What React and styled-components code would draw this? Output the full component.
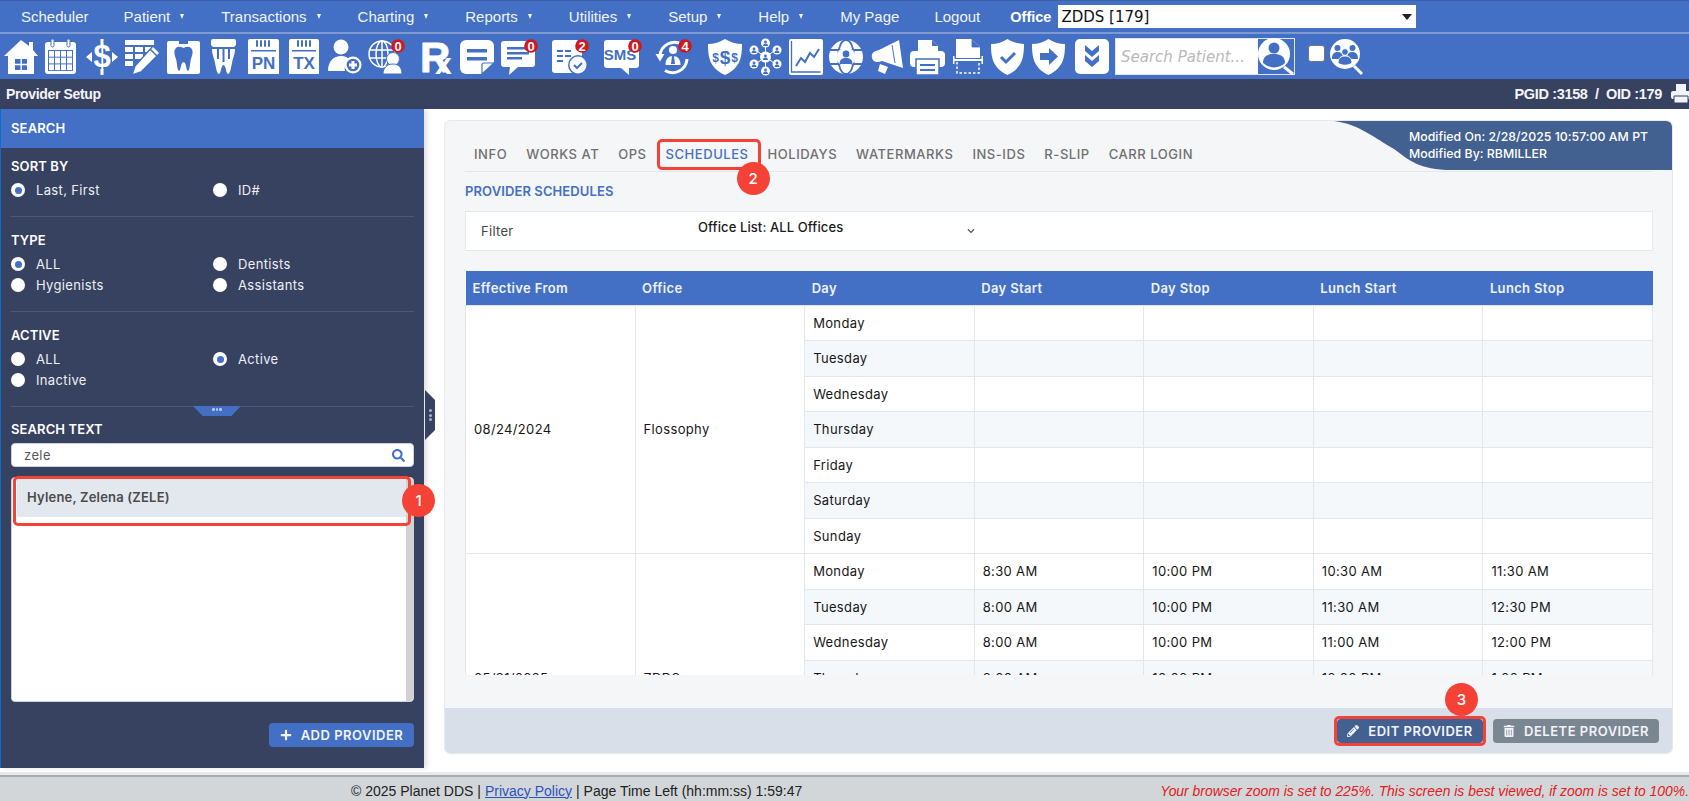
import React from "react";
import styled, { createGlobalStyle } from "styled-components";
import { FaPlus, FaPencilAlt, FaTrashAlt, FaSearch, FaChevronDown } from "react-icons/fa";

const BLUE = "#4370c4";
const NAVY = "#374160";
const RED = "#f44336";
const UI = `Inter, "Noto Sans", sans-serif`;
const ARIAL = `"Liberation Sans", Arial, sans-serif`;

const Global = createGlobalStyle`
  html, body { margin: 0; padding: 0; height: 100%; overflow: hidden; background: #fff; }
  * { box-sizing: border-box; }
  body { font-family: ${UI}; }
`;

const Page = styled.div`height: 100vh; display: flex; flex-direction: column; overflow: hidden;`;

/* top navigation */
const NavBar = styled.nav`
  height: 34px; flex: none; background: ${BLUE};
  border-top: 1px solid #3a5fa6; border-bottom: 2px solid #7f9ad0;
  padding-left: 21px; display: flex; align-items: center; gap: 35px;
  font: 15px ${ARIAL}; color: #f1f4fb;
`;
const NavItem = styled.span`display: inline-flex; align-items: center; white-space: nowrap;`;
const Caret = styled.span`
  margin: 0 2px 0 10px; width: 0; height: 0;
  border-left: 2.5px solid transparent; border-right: 2.5px solid transparent; border-top: 5px solid #f1f4fb;
`;
const OfficeGroup = styled.div`display: flex; align-items: center; gap: 7px; margin-left: -5px;`;
const OfficeLabel = styled.span`font: bold 14.5px ${ARIAL}; color: #fff;`;
const OfficeSelect = styled.div`
  width: 358px; height: 23px; background: #fff; color: #111; padding-left: 3px;
  display: flex; align-items: center; justify-content: space-between;
  font: 15px "DejaVu Sans", sans-serif;
`;
const SelectArrow = styled.span`
  margin-right: 4px; width: 0; height: 0;
  border-left: 5px solid transparent; border-right: 5px solid transparent; border-top: 6px solid #222;
`;

/* icon toolbar */
const Toolbar = styled.div`
  height: 45px; flex: none; background: ${BLUE}; display: flex; align-items: center; padding-left: 4px;
`;
const Slot = styled.svg`
  flex: none; height: 36px; margin-left: ${(p) => p.$gap}px; overflow: visible; fill: #fff;
  text { font-family: ${ARIAL}; font-weight: bold; }
`;
const PatientSearch = styled.div`
  margin-left: 6px; width: 180px; height: 37px; background: #fff; border: 1px solid #dfe6f5;
  display: flex; align-items: center; justify-content: space-between;
`;
const PatientHint = styled.span`
  padding-left: 5px; font: italic 15px "DejaVu Sans", sans-serif; color: #b9b9b9; white-space: nowrap;
`;
const UserSearchBox = styled.div`width: 36px; height: 35px; background: ${BLUE}; flex: none;`;
const CheckBox = styled.span`
  flex: none; width: 17px; height: 17px; margin: -6px 0 0 13px; background: #fff; border: 1px solid #777; border-radius: 3px;
`;

/* title bar */
const TitleBar = styled.div`
  height: 30px; flex: none; background: ${NAVY}; display: flex; align-items: center; justify-content: space-between;
  color: #f4f5f8; font: bold 14px ${ARIAL}; padding-left: 6px;
`;
const TitleText = styled.span`letter-spacing: -0.35px;`;
const TitleRight = styled.div`display: flex; align-items: center; gap: 9px; font-size: 14.5px; letter-spacing: -0.35px;`;

/* content */
const Content = styled.div`flex: 1; min-height: 0; display: flex; background: #fff;`;

const Sidebar = styled.aside`
  position: relative; width: 424px; flex: none; height: 659px; background: ${NAVY}; color: #fff;
  border-left: 1px solid #0a6ecb; box-shadow: 3px 0 5px rgba(0,0,0,.12);
`;
const SideHeader = styled.div`
  height: 39px; background: ${BLUE}; display: flex; align-items: center; padding: 0 0 1px 10px;
  font-size: 13px; font-weight: 600; letter-spacing: .15px;
`;
const SideBody = styled.div`padding: 0 10px;`;
const Section = styled.section`
  padding: ${(p) => (p.$first ? "10px" : "15px")} 0 16px;
  border-bottom: 1px solid #4c5775;
`;
const SectionTitle = styled.div`
  font-size: 13px; font-weight: 600; line-height: 16px; margin-bottom: 6px; letter-spacing: .1px;
`;
const RadioGrid = styled.div`display: grid; grid-template-columns: 202px 1fr; grid-auto-rows: 20px; row-gap: 1px;`;
const RadioRow = styled.label`display: flex; align-items: center; gap: 11px; font-size: 13px; letter-spacing: .35px; font-weight: 400; color: #eef0f5;`;
const RadioDot = styled.span`
  width: 14px; height: 14px; border-radius: 50%; background: #fff; display: inline-flex; align-items: center; justify-content: center;
  &::after { content: ""; width: 7px; height: 7px; border-radius: 50%; background: ${(p) => (p.$on ? BLUE : "#fff")}; }
`;
const DragTab = styled.div`
  position: absolute; left: 192px; top: 297px; width: 48px; height: 10px; background: ${BLUE};
  clip-path: polygon(0 0, 100% 0, 80% 100%, 20% 100%);
  display: flex; justify-content: center; gap: 1px; padding-top: 2px;
`;
const Pip = styled.i`width: 2.5px; height: 2.5px; background: #b6c6e6; border-radius: 50%;`;
const EdgeGrip = styled.div`
  position: absolute; right: -11px; top: 281px; width: 10px; height: 50px; background: ${NAVY};
  clip-path: polygon(0 0, 100% 20%, 100% 80%, 0 100%);
  display: flex; flex-direction: column; align-items: center; justify-content: center; gap: 1.5px;
  i { width: 3px; height: 3px; background: #a9b0c2; border-radius: 50%; }
`;
const SearchSection = styled.div`padding-top: 14px;`;
const SearchInput = styled.div`
  height: 24px; margin-top: 2px; background: #fff; border: 1px solid #ccd2dc; border-radius: 4px; padding: 0 8px 0 12px;
  display: flex; align-items: center; justify-content: space-between;
  color: #555; font-size: 13px; letter-spacing: .4px;
  svg { color: ${BLUE}; font-size: 13px; }
`;
const ResultList = styled.div`
  position: relative; height: 225px; margin-top: 10px; background: #fff; border-radius: 4px; border: 1px solid #ccd2dc;
  padding: 1px 6px 0 5px;
  &::after { content: ""; position: absolute; right: 0; top: 0; bottom: 0; width: 7px; background: #d2d2d2; border-radius: 0 3px 3px 0; }
`;
const ResultRow = styled.div`
  height: 38px; background: #e3e7ee; color: #4b4b4b; font-size: 13px; font-weight: 600; padding: 10px 0 0 10px; letter-spacing: .2px;
`;
const Outline = styled.span`
  position: absolute; pointer-events: none; z-index: 3; border: 3px solid ${RED}; border-radius: 5px;
  top: ${(p) => p.$t}px; left: ${(p) => p.$l}px; right: ${(p) => p.$r}px; bottom: ${(p) => p.$b}px;
`;
const Step = styled.span`
  position: absolute; z-index: 4; width: 33px; height: 33px; border-radius: 50%; background: ${RED}; color: #fff;
  display: flex; align-items: center; justify-content: center; font: 500 15px Inter, sans-serif; letter-spacing: 0;
  top: ${(p) => p.$t}px; left: ${(p) => p.$l}px;
`;
const SideActions = styled.div`display: flex; justify-content: flex-end; margin-top: 21px;`;
const Btn = styled.button`
  position: relative; height: 24px; border: 0; border-radius: 4px; color: #f1f3f8; background: ${(p) => p.$bg};
  width: ${(p) => p.$w}px; display: inline-flex; align-items: center; justify-content: center; gap: ${(p) => p.$gap || 9}px;
  font: 600 13px ${UI}; letter-spacing: .5px; white-space: nowrap; padding: 0;
  svg { font-size: 12px; }
`;

/* main card */
const Main = styled.main`flex: 1; min-width: 0; padding: 11px 16px 0 20px;`;
const Card = styled.div`
  position: relative; height: 634px; background: #f5f6f8; border: 1px solid #e7e9ee; border-radius: 6px;
  display: flex; flex-direction: column; overflow: hidden;
`;
const CardClip = styled.div`position: relative; flex: 1; min-height: 0; display: flex; flex-direction: column; padding: 0 19px 33px 20px;`;
const Tabs = styled.div`
  height: 51px; flex: none; border-bottom: 1px solid #e6e8ec; display: flex; gap: 19px; padding: 26px 0 0 9px;
`;
const Tab = styled.span`
  position: relative; height: 15px; line-height: 15px; font-size: 13px; font-weight: 500; letter-spacing: .55px;
  color: ${(p) => (p.$on ? BLUE : "#6f6f6f")}; white-space: nowrap;
`;
const Ribbon = styled.div`
  position: absolute; top: -1px; right: -1px; width: 338px; height: 50px; color: #fff;
  font-size: 12.3px; font-weight: 500; line-height: 17px; padding: 8px 0 0 74px; white-space: nowrap; letter-spacing: .03px;
`;
const RibbonArt = styled.svg`position: absolute; inset: 0; z-index: -1;`;
const RibbonLayer = styled.div`position: absolute; top: 0; right: 0; width: 338px; height: 50px; isolation: isolate;`;
const SectionHead = styled.div`
  flex: none; margin-top: 11px; height: 16px; line-height: 16px; color: ${BLUE}; font-size: 13px; font-weight: 600; letter-spacing: .1px;
`;
const FilterBar = styled.div`
  flex: none; height: 40px; margin-top: 12px; background: #fff; border: 1px solid #e6e8ed;
  display: flex; align-items: center; padding-left: 15px; font-size: 13px;
`;
const FilterLabel = styled.span`width: 217px; color: #444; letter-spacing: .3px;`;
const FilterValue = styled.div`
  width: 277px; display: flex; align-items: center; justify-content: space-between; color: #1a1a1a; font-weight: 500;
  span { margin-top: -9px; letter-spacing: .1px; }
  svg { font-size: 8px; color: #555; margin-right: 0; }
`;
const TableWrap = styled.div`flex: 1; min-height: 0; margin-top: 20px; overflow: hidden;`;
const Table = styled.table`
  width: 100%; table-layout: fixed; border-collapse: collapse; font-size: 13px; color: #161616; font-weight: 400; letter-spacing: .35px;
`;
const Th = styled.th`
  height: 34px; background: ${BLUE}; color: #eef2fb; font-weight: 600; text-align: left; padding: 0 7px; font-size: 13px; letter-spacing: .35px;
`;
const Td = styled.td`
  height: 35.5px; padding: 0 8px; border: 1px solid #e3e6ec; background: ${(p) => (p.$alt ? "#f5f8fb" : "#fff")};
`;
const CardFoot = styled.div`
  flex: none; height: 45px; background: #d9dfe8; display: flex; justify-content: flex-end; align-items: center; gap: 10px; padding-right: 13px;
`;

/* footer */
const Footer = styled.footer`
  height: 26px; flex: none; background: #d3d6d9; border-top: 2px solid #a8abae; box-shadow: 0 -3px 0 #e8e9ea; padding-top: 3px;
  display: flex; align-items: center; padding-left: 351px; font: 14px ${ARIAL}; color: #222; white-space: pre; position: relative;
`;
const FootLink = styled.a`color: #2a52be; text-decoration: underline; margin: 0 4px;`;
const FootWarn = styled.span`margin-left: auto; color: #e0201c; font-style: italic; font-size: 13.9px; padding-right: 0;`;

/* ---------- icons ---------- */
const Badge = ({ x, y = 7, n }) => (
  <g>
    <circle cx={x} cy={y} r="6.8" fill="#d4161c" />
    <text x={x} y={y + 4.7} fontSize="13" textAnchor="middle" fill="#fff">{n}</text>
  </g>
);
const I = ({ w, gap = 0, children }) => (
  <Slot viewBox={`0 0 ${w} 36`} width={w} $gap={gap}>{children}</Slot>
);
const Rings = ({ xs }) => xs.map((x) => <rect key={x} x={x} y="1" width="2" height="7" rx="1" fill={BLUE} />);

const Icons = [
  <I w={34} key="home"><path d="M17 1 25 7V3h4v8l5 6h-4v18H4V17H0z" /><rect x="11" y="20" width="12" height="11" fill={BLUE} /><path d="M16.5 20h1.4v11h-1.4zM11 24.8h12v1.4H11z" /></I>,
  <I w={31} gap={7} key="cal"><rect y="3" width="31" height="32" rx="3" /><rect x="6" y="0" width="3" height="8" rx="1.5" stroke={BLUE} /><rect x="22" y="0" width="3" height="8" rx="1.5" stroke={BLUE} /><path fill={BLUE} d="M3 11h25v21H3z" /><g>{[0, 1, 2, 3].map((c) => [0, 1, 2].map((r) => <rect key={`${c}${r}`} x={4 + c * 6} y={12 + r * 6.7} width="5" height="5.7" />))}</g></I>,
  <I w={32} gap={10} key="dollar"><text x="16" y="28" fontSize="31" textAnchor="middle">$</text><path d="M0 18l6-5v10zM32 18l-6-5v10z" /><path d="M16 0v6M16 30v6" stroke="#fff" strokeWidth="3" /></I>,
  <I w={35} gap={7} key="tablepen"><path d="M0 1h29v5H0zM0 8h8v5H0zM10 8h8v5h-8zM20 8h9v3l-2 2h-7zM0 15h8v5H0zM10 15h8v3l-2 2h-6zM0 22h8v5H0z" /><path d="M28 7l7 7-19 19-9 3 3-9z" stroke={BLUE} strokeWidth="1.4" /><path d="M25 10l7 7" stroke={BLUE} strokeWidth="1.5" /></I>,
  <I w={33} gap={7} key="toothcard"><path d="M0 4a2 2 0 0 1 2-2h10v3h9V2h10a2 2 0 0 1 2 2v29a2 2 0 0 1-2 2H2a2 2 0 0 1-2-2z" /><path fill={BLUE} d="M9 9c3-2 5-1 7.5 0 2.500-1 5-2 7.500 0 3 3 1 8 0 11-1 3-1 11-3 12-2 0-1.500-9-4.500-9s-2.500 9-4.500 9c-2-1-2-9-3-12-1-3-3-8 0-11z" /></I>,
  <I w={25} gap={11} key="crown"><path d="M2 0h21a2 2 0 0 1 2 2v4l-2 2H2L0 6V2a2 2 0 0 1 2-2z" /><path d="M1 10h23c0 6-2 8-3 14-1 5-2 11-4 11s-2-9-4.500-9S10 35 8 35s-3-6-4-11C3 18 1 16 1 10z" /><path d="M7 10v10M12.500 10v13M18 10v10" stroke={BLUE} strokeWidth="2" /></I>,
  <I w={31} gap={12} key="pn"><path d="M0 4h31v31H0z" /><rect x="0" y="0" width="31" height="10" rx="2" /><path fill={BLUE} d="M3 11h25v1.500H3z" /><Rings xs={[8, 12, 16, 20]} /><text x="15.500" y="30" fontSize="17" textAnchor="middle" fill={BLUE}>PN</text></I>,
  <I w={30} gap={10} key="tx"><path d="M0 4h30v31H0z" /><rect x="0" y="0" width="30" height="10" rx="2" /><path fill={BLUE} d="M3 11h24v1.500H3z" /><Rings xs={[8, 12, 16, 20]} /><text x="15" y="30" fontSize="17" textAnchor="middle" fill={BLUE}>TX</text></I>,
  <I w={33} gap={9} key="userplus"><circle cx="13" cy="8" r="7.500" /><path d="M0 32c0-10 6-15 13-15 4 0 7 1.500 9 4-4 2-6 6-5 11z" /><circle cx="25" cy="26" r="8.500" /><circle cx="25" cy="26" r="6.300" fill={BLUE} /><path d="M23.500 22h3v2.500H29v3h-2.500V30h-3v-2.500H21v-3h2.500z" /></I>,
  <I w={34} gap={7} key="globeuser"><g fill="none" stroke="#fff" strokeWidth="1.500"><circle cx="14" cy="15" r="13" /><ellipse cx="14" cy="15" rx="6" ry="13" /><path d="M14 2v26M1.500 11h25M1.500 19h25" /></g><circle cx="25" cy="20" r="6.500" stroke={BLUE} /><path d="M15 35c0-6 4-10 10-10s9 4 9 10z" stroke={BLUE} /><Badge x={30} n="0" /></I>,
  <I w={31} gap={19} key="rx"><text x="-1" y="33" fontSize="42" stroke="#fff" strokeWidth=".8">R</text><text x="14" y="35" fontSize="30">x</text></I>,
  <I w={34} gap={8} key="note"><path d="M6 1h22a6 6 0 0 1 6 6v16L21 35H6a6 6 0 0 1-6-6V7a6 6 0 0 1 6-6z" /><path fill={BLUE} d="M7 10h20v3.500H7zM7 18h20v3.500H7z" /><path d="M22 35V26a2 2 0 0 1 2-2h10z" stroke={BLUE} strokeWidth="1.200" /></I>,
  <I w={34} gap={7} key="chat"><path d="M3 2h28a3 3 0 0 1 3 3v20a3 3 0 0 1-3 3H17l-9 8 1-8H3a3 3 0 0 1-3-3V5a3 3 0 0 1 3-3z" /><path fill={BLUE} d="M6 8h22v2.500H6zM6 13h22v2.500H6zM6 18h15v2.500H6z" /><Badge x={30} n="0" /></I>,
  <I w={35} gap={17} key="doccheck"><path d="M3 1h22l5 5v18H3a3 3 0 0 1-3-3V4a3 3 0 0 1 3-3z" /><path d="M0 20h20v14H3a3 3 0 0 1-3-3z" /><path fill={BLUE} d="M5 11h6v2H5zM13 11h6v2h-6zM5 16h6v2H5zM13 16h6v2h-6zM5 21h6v2H5z" /><circle cx="26" cy="26" r="10" fill={BLUE} /><circle cx="26" cy="26" r="8.500" /><path d="M22 26l3 3 5-5" fill="none" stroke={BLUE} strokeWidth="2" /><Badge x={30} n="2" /></I>,
  <I w={35} gap={17} key="sms"><path d="M3 1h29a3 3 0 0 1 3 3v22a3 3 0 0 1-3 3H25v7l-8-7H3a3 3 0 0 1-3-3V4a3 3 0 0 1 3-3z" /><text x="16" y="21" fontSize="15" textAnchor="middle" fill={BLUE}>SMS</text><Badge x={31} n="0" /></I>,
  <I w={32} gap={18} key="refresh"><g fill="none" stroke="#fff" strokeWidth="3"><path d="M25 5.500A14.500 14.500 0 0 0 3 17" /><path d="M8 31.500A14.500 14.500 0 0 0 30 20" /></g><path d="M-1.500 15h9l-4.500 7.500z" /><circle cx="16" cy="11" r="4" /><path d="M8.500 26c0-6 3-9 7.500-9s7.500 3 7.500 9z" /><path d="M15 17h2l1 8h-4z" fill={BLUE} /><Badge x={28} n="4" /></I>,
  <I w={34} gap={19} key="shield"><path d="M17 0c5 3 11 5 17 5 0 14-2 24-17 31C2 29 0 19 0 5c6 0 12-2 17-5z" /><text x="17" y="25" fontSize="19" textAnchor="middle" fill={BLUE}>$</text><text x="7.500" y="23" fontSize="12" textAnchor="middle" fill={BLUE}>$</text><text x="26.500" y="23" fontSize="12" textAnchor="middle" fill={BLUE}>$</text></I>,
  <I w={33} gap={7} key="network"><g stroke="#fff" strokeWidth="1"><path d="M16.500 4v28M5 10l23 16M28 10 5 26" /></g>{[[16.5, 4], [5, 11], [28, 11], [5, 25], [28, 25], [16.5, 32], [16.5, 18]].map(([x, y]) => <g key={`${x}${y}`}><circle cx={x} cy={y} r={y === 18 ? 5.5 : 4.5} /><circle cx={x} cy={y - 1} r="1.400" fill={BLUE} /><path d={`M${x - 2.5} ${y + 3}a2.500 2.500 0 0 1 5 0z`} fill={BLUE} /></g>)}</I>,
  <I w={34} gap={7} key="chart"><rect y="0" width="34" height="36" rx="2" /><path fill="none" stroke={BLUE} strokeWidth="1.300" d="M2.500 2v31h29" /><path fill="none" stroke={BLUE} strokeWidth="2" d="M7 27l5-8 4 4 5-9 4 4 5-8" /></I>,
  <I w={34} gap={6} key="globeperson"><circle cx="17" cy="18" r="17" /><g fill="none" stroke={BLUE} strokeWidth="1.800"><ellipse cx="17" cy="18" rx="8" ry="17" /><path d="M1 11h32M1 25h32" /></g><circle cx="17" cy="18" r="9.500" /><circle cx="17" cy="15" r="3.400" fill={BLUE} /><path d="M10.500 25c0-4.500 3-6 6.500-6s6.500 1.500 6.500 6z" fill={BLUE} /></I>,
  <I w={32} gap={8} key="mega"><path d="M28 1l4 28L11 22c-5 2-9 1-10-3-1-5 2-7 7-8z" /><path d="M9 25l8 3-3 7-7-3z" /><path d="M21 6l3 18" stroke={BLUE} strokeWidth="1" /></I>,
  <I w={35} gap={7} key="printer"><path d="M8 1h14l6 6v7H8z" /><path d="M22 1v6h6" fill={BLUE} /><rect y="12" width="35" height="16" rx="4" /><path d="M6 20h23v16H6z" stroke={BLUE} strokeWidth="1.500" /><path fill={BLUE} d="M10 25h15v2H10zM10 30h15v2H10z" /></I>,
  <I w={30} gap={8} key="scan"><path d="M3 0h15l9 8v11H3z" /><path d="M19 1v7h8" fill={BLUE} stroke={BLUE} strokeWidth=".8" /><path d="M0 20h30v2H0zM0 17h1.500v8H0zM28.500 17H30v8h-1.500z" /><path d="M4 23v11h22V23" fill="none" stroke="#fff" strokeWidth="1.500" strokeDasharray="2.500 2" /></I>,
  <I w={33} gap={8} key="shieldcheck"><path d="M16.500 0C21 3 27 5 33 5c0 14-2 24-16.500 31C2 29 0 19 0 5 6 5 12 3 16.500 0z" /><path d="M10 18l5 5 9-9" fill="none" stroke={BLUE} strokeWidth="3" /></I>,
  <I w={33} gap={8} key="shieldarrow"><path d="M16.500 0C21 3 27 5 33 5c0 14-2 24-16.500 31C2 29 0 19 0 5 6 5 12 3 16.500 0z" /><path fill={BLUE} d="M8 14h9V9l9 8.500-9 8.500v-5H8z" /></I>,
  <I w={34} gap={10} key="chev"><rect width="34" height="35" rx="5" /><path d="M10 6l7 6 7-6v6l-7 6-7-6zM10 16l7 6 7-6v6l-7 6-7-6z" fill={BLUE} /></I>,
];

const UserSearch = () => (
  <svg width="36" height="36" viewBox="0 0 36 36" style={{ overflow: "visible", display: "block" }}>
    <circle cx="16" cy="15" r="16" fill="#fff" />
    <circle cx="16" cy="9" r="5.500" fill={BLUE} />
    <path d="M5 24c0-7 5-9 11-9s11 2 11 9a16 16 0 0 1-22 0z" fill={BLUE} />
    <path d="M26 28l9 7" stroke="#fff" strokeWidth="3" />
  </svg>
);
const GroupSearch = () => (
  <Slot viewBox="0 0 33 36" width="33" $gap={5}>
    <circle cx="15" cy="15" r="15" />
    <g fill={BLUE}>
      <circle cx="7.500" cy="9" r="3" /><circle cx="22.500" cy="9" r="3" /><path d="M2 20c0-5 2-7 5.500-7s5 1.500 5 3v4zM28 20c0-5-2-7-5.500-7s-5 1.500-5 3v4z" />
      <circle cx="15" cy="13" r="3.400" stroke="#fff" /><path d="M8 24c0-5 3-7 7-7s7 2 7 7c-4 3-10 3-14 0z" stroke="#fff" />
    </g>
    <path d="M24 27l8 8" stroke="#fff" strokeWidth="3" />
  </Slot>
);
const PrinterMini = () => (
  <svg width="20" height="22" viewBox="0 0 20 22" style={{ marginRight: -2 }} fill="#f1f3f7">
    <path d="M5 1h10v7H5z" /><rect y="8" width="20" height="8" rx="2" /><path d="M3 13h14v7H3z" stroke={NAVY} />
  </svg>
);

/* ---------- data ---------- */
const DAYS = ["Monday", "Tuesday", "Wednesday", "Thursday", "Friday", "Saturday", "Sunday"];
const GROUPS = [
  { from: "08/24/2024", office: "Flossophy", rows: {} },
  {
    from: "05/31/2025", office: "ZDDS",
    rows: {
      Monday: ["8:30 AM", "10:00 PM", "10:30 AM", "11:30 AM"],
      Tuesday: ["8:00 AM", "10:00 PM", "11:30 AM", "12:30 PM"],
      Wednesday: ["8:00 AM", "10:00 PM", "11:00 AM", "12:00 PM"],
      Thursday: ["8:00 AM", "10:00 PM", "12:00 PM", "1:00 PM"],
      Friday: ["8:00 AM", "10:00 PM", "12:00 PM", "1:00 PM"],
      Saturday: ["", "", "", ""],
      Sunday: ["", "", "", ""],
    },
  },
];
const NAV = [["Scheduler"], ["Patient", 1], ["Transactions", 1], ["Charting", 1], ["Reports", 1], ["Utilities", 1], ["Setup", 1], ["Help", 1], ["My Page"], ["Logout"]];
const TABS = ["INFO", "WORKS AT", "OPS", "SCHEDULES", "HOLIDAYS", "WATERMARKS", "INS-IDS", "R-SLIP", "CARR LOGIN"];
const HEAD = ["Effective From", "Office", "Day", "Day Start", "Day Stop", "Lunch Start", "Lunch Stop"];

const Radio = ({ on, children }) => (
  <RadioRow><RadioDot $on={on} />{children}</RadioRow>
);

export default function App() {
  return (
    <Page>
      <Global />
      <NavBar>
        {NAV.map(([label, caret]) => (
          <NavItem key={label}>{label}{caret && <Caret />}</NavItem>
        ))}
        <OfficeGroup>
          <OfficeLabel>Office</OfficeLabel>
          <OfficeSelect>ZDDS [179]<SelectArrow /></OfficeSelect>
        </OfficeGroup>
      </NavBar>

      <Toolbar>
        {Icons}
        <PatientSearch>
          <PatientHint>Search Patient...</PatientHint>
          <UserSearchBox><UserSearch /></UserSearchBox>
        </PatientSearch>
        <CheckBox />
        <GroupSearch />
      </Toolbar>

      <TitleBar>
        <TitleText>Provider Setup</TitleText>
        <TitleRight>PGID :3158&nbsp;&nbsp;/&nbsp;&nbsp;OID :179<PrinterMini /></TitleRight>
      </TitleBar>

      <Content>
        <Sidebar>
          <SideHeader>SEARCH</SideHeader>
          <SideBody>
            <Section $first>
              <SectionTitle>SORT BY</SectionTitle>
              <RadioGrid>
                <Radio on>Last, First</Radio>
                <Radio>ID#</Radio>
              </RadioGrid>
            </Section>
            <Section>
              <SectionTitle>TYPE</SectionTitle>
              <RadioGrid>
                <Radio on>ALL</Radio>
                <Radio>Dentists</Radio>
                <Radio>Hygienists</Radio>
                <Radio>Assistants</Radio>
              </RadioGrid>
            </Section>
            <Section>
              <SectionTitle>ACTIVE</SectionTitle>
              <RadioGrid>
                <Radio>ALL</Radio>
                <Radio on>Active</Radio>
                <Radio>Inactive</Radio>
              </RadioGrid>
            </Section>
            <DragTab><Pip /><Pip /><Pip /></DragTab>
            <SearchSection>
              <SectionTitle>SEARCH TEXT</SectionTitle>
              <SearchInput>zele<FaSearch /></SearchInput>
              <ResultList>
                <ResultRow>Hylene, Zelena (ZELE)</ResultRow>
                <Outline $t={-2} $l={1} $r={2} $b={175} />
                <Step $t={6} $l={390}>1</Step>
              </ResultList>
              <SideActions>
                <Btn $bg={BLUE} $w={145}><FaPlus />ADD PROVIDER</Btn>
              </SideActions>
            </SearchSection>
          </SideBody>
          <EdgeGrip><i /><i /><i /></EdgeGrip>
        </Sidebar>

        <Main>
          <Card>
            <CardClip>
              <Tabs>
                {TABS.map((t) => (
                  <Tab key={t} $on={t === "SCHEDULES"}>
                    {t}
                    {t === "SCHEDULES" && (
                      <>
                        <Outline $t={-8} $l={-9} $r={-12} $b={-8} />
                        <Step $t={15} $l={71}>2</Step>
                      </>
                    )}
                  </Tab>
                ))}
              </Tabs>
              <SectionHead>PROVIDER SCHEDULES</SectionHead>
              <FilterBar>
                <FilterLabel>Filter</FilterLabel>
                <FilterValue><span>Office List: ALL Offices</span><FaChevronDown /></FilterValue>
              </FilterBar>
              <TableWrap>
                <Table>
                  <thead>
                    <tr>{HEAD.map((h) => <Th key={h}>{h}</Th>)}</tr>
                  </thead>
                  <tbody>
                    {GROUPS.map((g) =>
                      DAYS.map((d, i) => {
                        const vals = g.rows[d] || ["", "", "", ""];
                        return (
                          <tr key={g.from + d}>
                            {i === 0 && <Td rowSpan={7}>{g.from}</Td>}
                            {i === 0 && <Td rowSpan={7}>{g.office}</Td>}
                            <Td $alt={i % 2 === 1}>{d}</Td>
                            {vals.map((v, k) => <Td key={k} $alt={i % 2 === 1}>{v}</Td>)}
                          </tr>
                        );
                      })
                    )}
                  </tbody>
                </Table>
              </TableWrap>
              <RibbonLayer>
                <RibbonArt viewBox="0 0 338 50" width="338" height="50">
                  <path fill="#426090" d="M0 0C25 3 42 18 60 28 75 39 85 49 118 49H338V6Q338 0 332 0Z" />
                </RibbonArt>
                <Ribbon>Modified On: 2/28/2025 10:57:00 AM PT<br />Modified By: RBMILLER</Ribbon>
              </RibbonLayer>
            </CardClip>
            <CardFoot>
              <Btn $bg="#426090" $w={146}>
                <FaPencilAlt />EDIT PROVIDER
                <Outline $t={-3} $l={-3} $r={-3} $b={-3} />
                <Step $t={-36} $l={108}>3</Step>
              </Btn>
              <Btn $bg="#7b8693" $w={166}><FaTrashAlt />DELETE PROVIDER</Btn>
            </CardFoot>
          </Card>
        </Main>
      </Content>

      <Footer>
        {"© 2025 Planet DDS |"}<FootLink>Privacy Policy</FootLink>{"| Page Time Left (hh:mm:ss) 1:59:47"}
        <FootWarn>Your browser zoom is set to 225%. This screen is best viewed, if zoom is set to 100%.</FootWarn>
      </Footer>
    </Page>
  );
}
